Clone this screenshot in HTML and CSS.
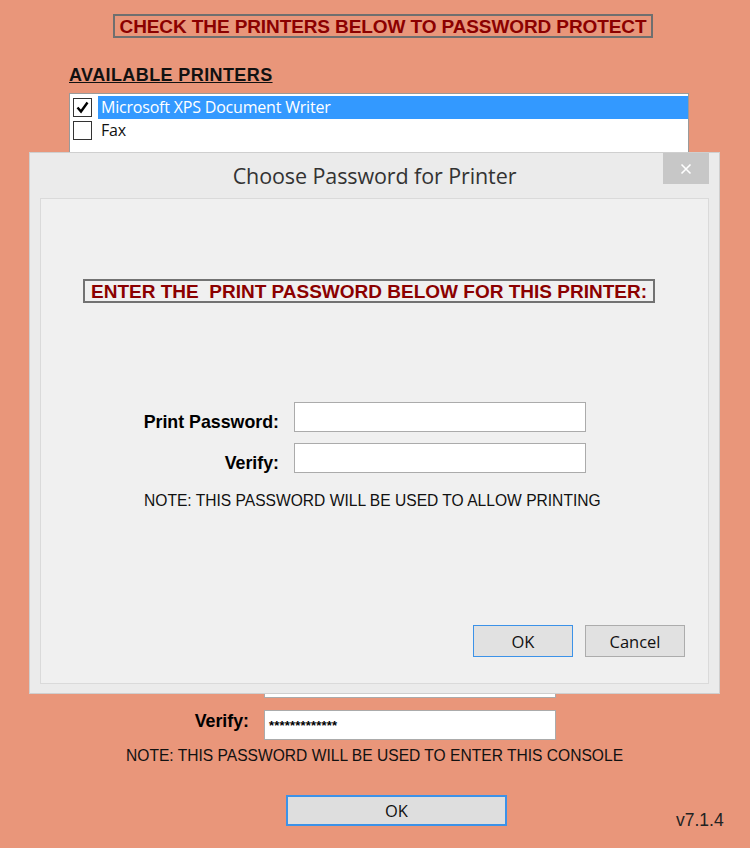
FILE: index.html
```html
<!DOCTYPE html>
<html>
<head>
<meta charset="utf-8">
<link rel="stylesheet" href="styles.css">
</head>
<body>
<div class="page">
  <div class="title-box">CHECK THE PRINTERS BELOW TO PASSWORD PROTECT</div>
  <div class="heading">AVAILABLE PRINTERS</div>
  <div class="listbox">
    <div class="item selected">
      <span class="check checked"><svg width="15" height="15" viewBox="0 0 15 15"><path d="M2.5 7.5 L6 11.5 L12.5 2.5" fill="none" stroke="#000" stroke-width="2.4"/></svg></span>
      <span class="item-text">Microsoft XPS Document Writer</span>
    </div>
    <div class="item">
      <span class="check"></span>
      <span class="item-text">Fax</span>
    </div>
  </div>
  <div class="form main-form">
    <label class="lbl">Print Password:</label>
    <div class="input"></div>
    <label class="lbl">Verify:</label>
    <div class="input"><span class="dots">*************</span></div>
  </div>
  <div class="note main-note">NOTE: THIS PASSWORD WILL BE USED TO ENTER THIS CONSOLE</div>
  <div class="footer">
    <button class="btn main-ok">OK</button>
    <span class="version">v7.1.4</span>
  </div>
</div>

<div class="dialog">
  <div class="titlebar">
    <span class="dlg-title">Choose Password for Printer</span>
    <span class="close"><svg width="12" height="12" viewBox="0 0 12 12"><path d="M1.5 1.5 L10.5 10.5 M10.5 1.5 L1.5 10.5" stroke="#fff" stroke-width="1.6"/></svg></span>
  </div>
  <div class="panel">
    <div class="red-box">ENTER THE  PRINT PASSWORD BELOW FOR THIS PRINTER:</div>
    <div class="form dlg-form">
      <label class="lbl">Print Password:</label>
      <div class="input"></div>
      <label class="lbl">Verify:</label>
      <div class="input"></div>
    </div>
    <div class="note dlg-note">NOTE: THIS PASSWORD WILL BE USED TO ALLOW PRINTING</div>
    <div class="buttons">
      <button class="btn dlg-btn default">OK</button>
      <button class="btn dlg-btn">Cancel</button>
    </div>
  </div>
</div>
</body>
</html>
```

FILE: styles.css
```css
html, body {
  margin: 0;
  padding: 0;
}
body {
  width: 750px;
  height: 848px;
  background: #E9967A;
  font-family: "Liberation Sans", Arial, sans-serif;
  position: relative;
  overflow: hidden;
}
.page {
  display: flex;
  flex-direction: column;
  padding-top: 14px;
}
.title-box {
  margin-left: 113px;
  width: 536px;
  height: 20px;
  border: 2px solid #6f6f6f;
  color: #8B0000;
  font-weight: bold;
  font-size: 19px;
  letter-spacing: -0.1px;
  line-height: 21px;
  text-align: center;
  white-space: nowrap;
}
.heading {
  margin: 27px 0 0 69px;
  font-weight: bold;
  font-size: 18px;
  letter-spacing: 0.4px;
  line-height: 20px;
  text-decoration: underline;
  color: #111;
}
.listbox {
  margin: 8px 0 0 69px;
  width: 618px;
  height: 200px;
  background: #fff;
  border: 1px solid #9a9a9a;
  padding-top: 2px;
  display: flex;
  flex-direction: column;
}
.item {
  display: flex;
  align-items: center;
  height: 23px;
  font-family: "Open Sans", sans-serif;
  font-size: 16px;
  color: #111;
}
.check {
  margin-left: 3px;
  width: 17px;
  height: 17px;
  border: 1px solid #333;
  background: #fff;
  display: flex;
  align-items: center;
  justify-content: center;
  flex: none;
}
.item-text {
  margin-left: 7px;
  padding-left: 2px;
  flex: 1;
  height: 23px;
  line-height: 22px;
  letter-spacing: -0.2px;
}
.item.selected .item-text {
  background: #3399FF;
  color: #fff;
  margin-left: 6px;
  padding-left: 3px;
}
.form {
  display: grid;
  column-gap: 15px;
  row-gap: 12px;
  align-items: center;
}
.main-form {
  margin-top: 371px;
  grid-template-columns: 249px 292px;
}
.main-form .lbl {
  position: relative;
  top: -4px;
}
.lbl {
  text-align: right;
  font-weight: bold;
  font-size: 17.8px;
  color: #000;
}
.input {
  height: 28px;
  background: #fff;
  border: 1px solid #ababab;
  display: flex;
  align-items: center;
}
.dots {
  font-size: 13px;
  font-weight: bold;
  margin-left: 4px;
  margin-top: 1px;
  letter-spacing: 0.2px;
  color: #000;
}
.note {
  font-size: 15.6px;
  color: #111;
  white-space: nowrap;
}
.main-note {
  margin: 7px 0 0 126px;
}
.footer {
  display: flex;
  align-items: flex-end;
  margin-top: 30px;
}
.btn {
  font-family: "Open Sans", sans-serif;
  font-size: 16.5px;
  color: #111;
  background: #e1e1e1;
  border: 1px solid #adadad;
  padding: 0;
}
.main-ok {
  margin-left: 286px;
  width: 221px;
  height: 31px;
  border: 2px solid #3c92e8;
  background: #dedede;
}
.version {
  margin-left: 169px;
  font-size: 17.5px;
  color: #222;
  line-height: 18px;
  position: relative;
  top: 3px;
}
.dialog {
  position: absolute;
  left: 29px;
  top: 152px;
  width: 689px;
  height: 540px;
  background: #EBEBEB;
  border: 1px solid #cfcfcf;
  display: flex;
  flex-direction: column;
}
.titlebar {
  height: 45px;
  display: flex;
  justify-content: center;
  position: relative;
}
.dlg-title {
  font-family: "Open Sans", sans-serif;
  font-size: 21.5px;
  color: #333;
  margin-top: 8px;
  letter-spacing: -0.1px;
}
.close {
  position: absolute;
  right: 10px;
  top: 0;
  width: 46px;
  height: 31px;
  background: #c7c7c7;
  display: flex;
  align-items: center;
  justify-content: center;
}
.panel {
  margin: 0 10px;
  height: 484px;
  background: #F0F0F0;
  border: 1px solid #dadada;
  display: flex;
  flex-direction: column;
}
.red-box {
  margin: 80px 0 0 42px;
  width: 568px;
  height: 20px;
  border: 2px solid #727272;
  color: #8B0000;
  font-weight: bold;
  font-size: 19px;
  line-height: 21px;
  text-align: center;
  white-space: pre;
  background: #F0F0F0;
}
.dlg-form {
  margin: 99px 0 0 0;
  grid-template-columns: 238px 292px;
  row-gap: 11px;
}
.dlg-form .lbl {
  position: relative;
  top: 5px;
}
.dlg-note {
  margin: 19px 0 0 103px;
}
.buttons {
  display: flex;
  gap: 12px;
  margin: 115px 0 0 432px;
}
.dlg-btn {
  width: 100px;
  height: 32px;
  border: 1px solid #acacac;
  background: #e1e1e1;
}
.dlg-btn.default {
  border: 1px solid #3c92e8;
}
```
